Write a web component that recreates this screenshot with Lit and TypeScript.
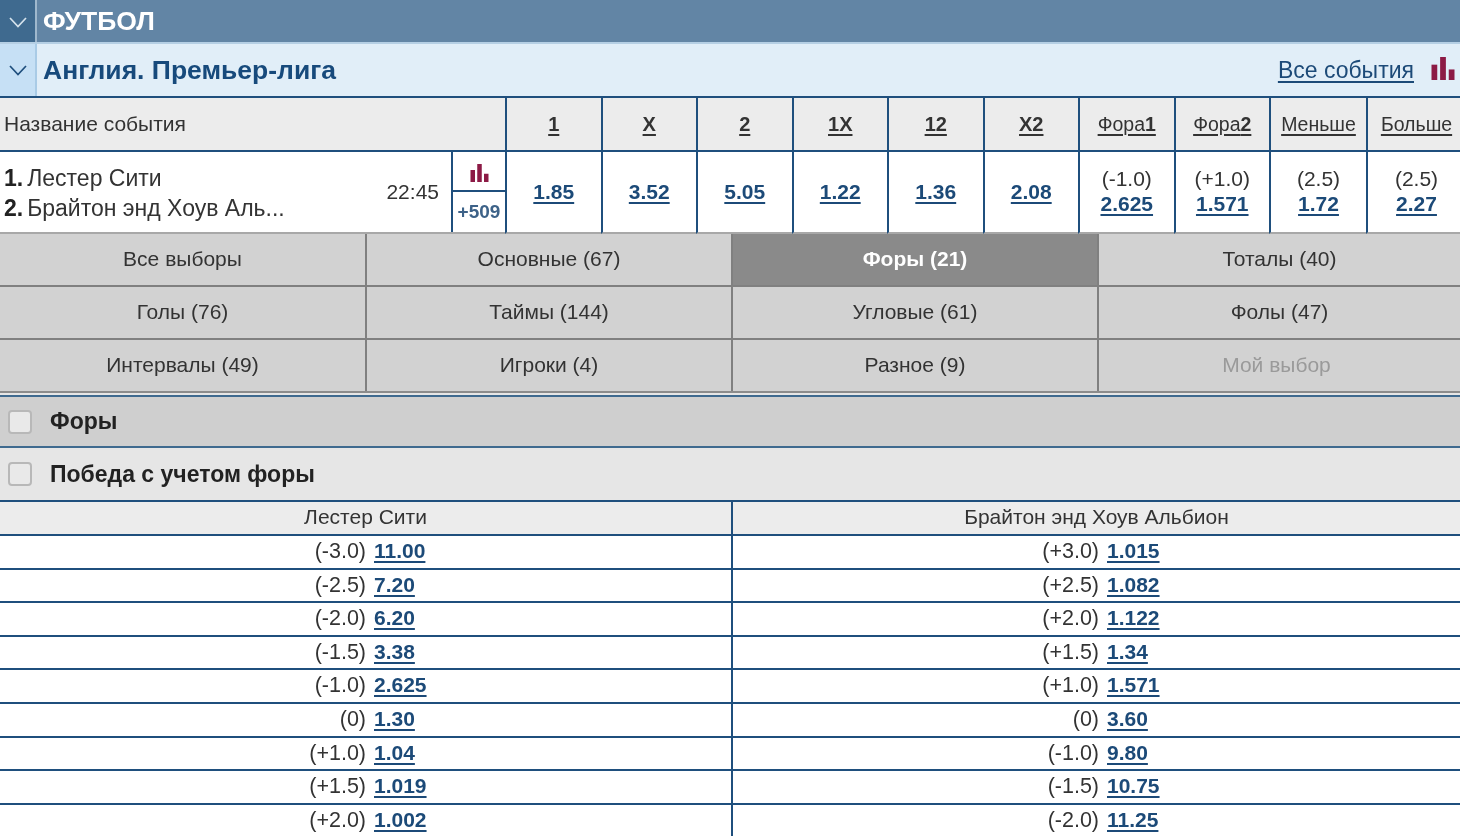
import { html, css, LitElement, svg } from 'lit';
import { customElement } from 'lit/decorators.js';

const MARKETS = [
  ['1', '1.85'],
  ['X', '3.52'],
  ['2', '5.05'],
  ['1X', '1.22'],
  ['12', '1.36'],
  ['X2', '2.08'],
];

const EXTRA = [
  { label: 'Фора', bold: '1', top: '(-1.0)', odd: '2.625' },
  { label: 'Фора', bold: '2', top: '(+1.0)', odd: '1.571' },
  { label: 'Меньше', bold: '', top: '(2.5)', odd: '1.72' },
  { label: 'Больше', bold: '', top: '(2.5)', odd: '2.27' },
];

const TABS = [
  'Все выборы',
  'Основные (67)',
  'Форы (21)',
  'Тоталы (40)',
  'Голы (76)',
  'Таймы (144)',
  'Угловые (61)',
  'Фолы (47)',
  'Интервалы (49)',
  'Игроки (4)',
  'Разное (9)',
  'Мой выбор',
];

const HANDICAPS = [
  ['(-3.0)', '11.00', '(+3.0)', '1.015'],
  ['(-2.5)', '7.20', '(+2.5)', '1.082'],
  ['(-2.0)', '6.20', '(+2.0)', '1.122'],
  ['(-1.5)', '3.38', '(+1.5)', '1.34'],
  ['(-1.0)', '2.625', '(+1.0)', '1.571'],
  ['(0)', '1.30', '(0)', '3.60'],
  ['(+1.0)', '1.04', '(-1.0)', '9.80'],
  ['(+1.5)', '1.019', '(-1.5)', '10.75'],
  ['(+2.0)', '1.002', '(-2.0)', '11.25'],
];

const chevron = svg`<svg class="chevron" viewBox="0 0 18 11" width="18" height="11"><path d="M1 1l8 8.5 8-8.5" fill="none" stroke="currentColor" stroke-width="1.7"/></svg>`;

function bars(w: number, h: number) {
  return html`<svg viewBox="0 0 24 24" width=${w} height=${h} class="bars">
    <rect x="0" y="8" width="6" height="16" />
    <rect x="9" y="0" width="6" height="24" />
    <rect x="18" y="13" width="6" height="11" />
  </svg>`;
}

@customElement('app-root')
export class AppRoot extends LitElement {
  static styles = css`
    :host {
      display: block;
      height: 836px;
      overflow: hidden;
      background: #fff;
      font-family: 'Liberation Sans', Arial, sans-serif;
      font-size: 20px;
      color: #333;
      filter: blur(0.4px);
    }
    a {
      color: #1c4a78;
      font-weight: bold;
      text-decoration: underline;
      text-underline-offset: 3px;
      text-decoration-thickness: 2px;
    }

    .sport {
      display: flex;
      height: 42px;
      background: #6285a5;
      border-bottom: 2px solid #b5cfe4;
    }
    .sport .toggle {
      background: #3f6a8f;
      border-right: 2px solid #9fb8cd;
      color: #d5e2ec;
      padding-top: 3px;
    }
    .toggle {
      width: 35px;
      flex: none;
      display: flex;
      align-items: center;
      justify-content: center;
    }
    .sport .title {
      padding-left: 6px;
      align-self: center;
      color: #fff;
      font-size: 26.5px;
      font-weight: bold;
    }

    .league {
      display: flex;
      align-items: stretch;
      height: 52px;
      background: #e1eef8;
      border-bottom: 2px solid #1f4f7d;
    }
    .league .toggle {
      background: #c6e0f5;
      border-right: 2px solid #a9cbe6;
      color: #1f4f7d;
    }
    .league .title {
      padding-left: 6px;
      align-self: center;
      flex: 1;
      color: #174a7c;
      font-size: 26.5px;
      font-weight: bold;
    }
    .all {
      align-self: center;
      color: #1c4a78;
      font-size: 23px;
      font-weight: normal;
      margin: 0 17px 0 0;
    }
    .league .bars {
      align-self: center;
      margin: 0 5px 4px 0;
    }
    .bars {
      fill: #8c1a45;
    }

    .grid {
      display: grid;
      grid-template-columns: 505px repeat(8, 95.5px) 97px 99px;
    }
    .head {
      height: 52px;
      background: #ececec;
      border-bottom: 2px solid #1f4f7d;
      display: flex;
      align-items: center;
      justify-content: center;
      border-left: 2px solid #1f4f7d;
    }
    .head a {
      color: #333;
    }
    .head.small a {
      font-weight: normal;
      font-size: 19.5px;
    }
    .head.small b {
      font-weight: bold;
    }
    .head.name {
      border-left: none;
      justify-content: flex-start;
      padding-left: 4px;
      font-size: 21px;
    }

    .event {
      height: 80px;
      display: flex;
      border-bottom: 2px solid #a8a8a8;
    }
    .teams {
      flex: 1;
      display: flex;
      flex-direction: column;
      justify-content: center;
      padding: 2px 0 0 4px;
      font-size: 23px;
      line-height: 30px;
    }
    .teams b {
      margin-right: 4px;
      color: #222;
    }
    .time {
      align-self: center;
      font-size: 21px;
      margin-right: 12px;
    }
    .side {
      width: 52px;
      flex: none;
      border-left: 2px solid #1f4f7d;
      display: flex;
      flex-direction: column;
    }
    .side .stat {
      height: 40px;
      box-sizing: border-box;
      padding-top: 3px;
      display: flex;
      align-items: center;
      justify-content: center;
      border-bottom: 2px solid #1f4f7d;
    }
    .side .more {
      flex: 1;
      display: flex;
      align-items: center;
      justify-content: center;
      font-size: 19px;
      font-weight: bold;
      color: #3d6288;
    }
    .cell {
      height: 78px;
      padding-bottom: 2px;
      border-left: 2px solid #1f4f7d;
      border-bottom: 2px solid #a8a8a8;
      display: flex;
      flex-direction: column;
      align-items: center;
      justify-content: center;
      line-height: 25px;
    }
    .cell span {
      font-size: 21px;
    }
    .cell a {
      font-size: 21px;
    }

    .tabs {
      display: grid;
      grid-template-columns: 367px 366px 366px 1fr;
      background: #d2d2d2;
      border-bottom: 2px solid #8c8c8c;
    }
    .tab {
      height: 49px;
      padding-bottom: 2px;
      display: flex;
      align-items: center;
      justify-content: center;
      border-right: 2px solid #808080;
      border-bottom: 2px solid #808080;
      font-size: 21px;
    }
    .tab:nth-child(4n) {
      border-right: none;
    }
    .tab:nth-child(n + 9) {
      border-bottom: none;
    }
    .tab.active {
      background: #8a8a8a;
      color: #fff;
      font-weight: bold;
    }
    .tab.off {
      color: #9a9a9a;
      padding-right: 6px;
    }

    .gap {
      height: 2px;
      background: #e6e6e6;
    }
    .section {
      display: flex;
      align-items: center;
      height: 49px;
      border-top: 2px solid #3f6a8f;
      font-size: 23px;
      font-weight: bold;
      color: #222;
      padding-left: 8px;
    }
    .section.dark {
      background: #cfcfcf;
    }
    .section.light {
      background: #e6e6e6;
      height: 52px;
    }
    .box {
      width: 24px;
      height: 24px;
      box-sizing: border-box;
      border: 2px solid #b8b8b8;
      border-radius: 4px;
      background: #e9e9e9;
      margin-right: 18px;
    }

    .teamsrow {
      display: grid;
      grid-template-columns: 731px 1fr;
      height: 32px;
      background: #ececec;
      border-top: 2px solid #1f4f7d;
      border-bottom: 2px solid #1f4f7d;
      font-size: 21px;
      text-align: center;
      line-height: 30px;
    }
    .teamsrow div + div {
      border-left: 2px solid #1f4f7d;
    }
    .row {
      display: grid;
      grid-template-columns: 366px 367px 366px 1fr;
      box-sizing: border-box;
      height: 33.6px;
      border-bottom: 2px solid #1f4f7d;
      font-size: 21px;
      line-height: 30px;
    }
    .row .lab {
      text-align: right;
      font-size: 21.5px;
    }
    .row .odd {
      padding-left: 8px;
    }
    .row .odd:nth-child(2) {
      border-right: 2px solid #1f4f7d;
      box-sizing: border-box;
    }
  `;

  render() {
    return html`
      <div class="sport">
        <div class="toggle">${chevron}</div>
        <div class="title">ФУТБОЛ</div>
      </div>
      <div class="league">
        <div class="toggle">${chevron}</div>
        <div class="title">Англия. Премьер-лига</div>
        <a class="all">Все события</a>
        ${bars(24, 23)}
      </div>

      <div class="grid">
        <div class="head name">Название события</div>
        ${MARKETS.map(([m]) => html`<div class="head"><a>${m}</a></div>`)}
        ${EXTRA.map(
          (e) => html`<div class="head small"><a>${e.label}<b>${e.bold}</b></a></div>`,
        )}

        <div class="event">
          <div class="teams">
            <div><b>1.</b>Лестер Сити</div>
            <div><b>2.</b>Брайтон энд Хоув Аль...</div>
          </div>
          <div class="time">22:45</div>
          <div class="side">
            <div class="stat">${bars(21, 18)}</div>
            <div class="more">+509</div>
          </div>
        </div>
        ${MARKETS.map(([, v]) => html`<div class="cell"><a>${v}</a></div>`)}
        ${EXTRA.map(
          (e) => html`<div class="cell"><span>${e.top}</span><a>${e.odd}</a></div>`,
        )}
      </div>

      <div class="tabs">
        ${TABS.map(
          (t, i) =>
            html`<div class="tab ${i === 2 ? 'active' : ''} ${i === 11 ? 'off' : ''}">${t}</div>`,
        )}
      </div>
      <div class="gap"></div>

      <div class="section dark"><span class="box"></span>Форы</div>
      <div class="section light"><span class="box"></span>Победа с учетом форы</div>

      <div class="teamsrow">
        <div>Лестер Сити</div>
        <div>Брайтон энд Хоув Альбион</div>
      </div>
      ${HANDICAPS.map(
        ([a, b, c, d]) => html`<div class="row">
          <div class="lab">${a}</div>
          <div class="odd"><a>${b}</a></div>
          <div class="lab">${c}</div>
          <div class="odd"><a>${d}</a></div>
        </div>`,
      )}
    `;
  }
}
